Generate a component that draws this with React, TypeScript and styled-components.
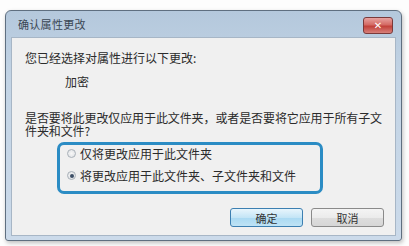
import styled, { createGlobalStyle } from "styled-components";

const Global = createGlobalStyle`
  html, body {
    margin: 0;
    padding: 0;
    background: #fdfdfd;
  }
  body {
    font-family: "Noto Sans CJK SC", "Noto Sans", sans-serif;
    font-size: 12px;
    color: #2b2b2b;
  }
`;

const Page = styled.div`
  width: 409px;
  height: 246px;
  padding: 10px 0 0 5px;
  box-sizing: border-box;
`;

const Window = styled.div`
  width: 397px;
  height: 231px;
  box-sizing: border-box;
  border: 1px solid #5f6f80;
  border-radius: 6px 6px 3px 3px;
  background: linear-gradient(180deg, #b4c8dc 0%, #c3d4e5 30%, #cbdaea 100%);
  box-shadow: 1px 2px 4px rgba(0, 0, 0, 0.25);
  display: flex;
  flex-direction: column;
  padding: 0 5px 4px 5px;
`;

const TitleBar = styled.div`
  height: 26px;
  display: flex;
  align-items: center;
  justify-content: space-between;
  padding: 0 3px 0 7px;
`;

const Title = styled.span`
  font-size: 11px;
  color: #3a4654;
  letter-spacing: 0.3px;
`;

const CloseButton = styled.div`
  width: 28px;
  height: 15px;
  margin-top: 2px;
  border: 1px solid #7a3a3a;
  border-radius: 3px;
  background: linear-gradient(180deg, #e8a3a0 0%, #d46a64 45%, #c2413a 55%, #d7807a 100%);
  display: flex;
  align-items: center;
  justify-content: center;
  color: #fff;
  font-family: "DejaVu Sans", sans-serif;
  font-size: 10px;
  font-weight: bold;
`;

const Panel = styled.div`
  flex: 1;
  background: #f0f0f0;
  border: 1px solid #a7b6c6;
  display: flex;
  flex-direction: column;
  padding: 13px 11px 8px 13px;
`;

const Line = styled.div<{ indent?: number; gap?: number }>`
  line-height: 14px;
  margin-left: ${(p) => p.indent ?? 0}px;
  margin-top: ${(p) => p.gap ?? 0}px;
`;

const Question = styled.div`
  margin-top: 22px;
  line-height: 13px;
  letter-spacing: -0.1px;
`;

const GroupBox = styled.div`
  margin: 5px 0 0 32px;
  width: 266px;
  height: 52px;
  box-sizing: border-box;
  border: 3px solid #2b8cc4;
  border-radius: 7px;
  display: flex;
  flex-direction: column;
  gap: 7px;
  padding: 1px 0 0 7px;
`;

const Option = styled.label`
  display: flex;
  align-items: center;
  gap: 4px;
  line-height: 15px;
`;

const Radio = styled.span<{ checked?: boolean }>`
  width: 9px;
  height: 9px;
  border-radius: 50%;
  box-sizing: border-box;
  border: 1px solid #a9b1b9;
  background: radial-gradient(circle, #f7f7f7 0%, #dcdfe3 100%);
  display: flex;
  align-items: center;
  justify-content: center;
  &::after {
    content: "";
    width: 4px;
    height: 4px;
    border-radius: 50%;
    background: ${(p) => (p.checked ? "#3d4f66" : "transparent")};
  }
`;

const Buttons = styled.div`
  margin-top: auto;
  display: flex;
  justify-content: flex-end;
  gap: 8px;
`;

const Button = styled.div<{ primary?: boolean }>`
  width: 73px;
  height: 19px;
  box-sizing: border-box;
  border: 1px solid ${(p) => (p.primary ? "#3c7fb1" : "#8a8a8a")};
  border-radius: 3px;
  background: ${(p) =>
    p.primary
      ? "linear-gradient(180deg, #e8f5fc 0%, #c4e5f6 50%, #a9d9f2 51%, #bfe3f5 100%)"
      : "linear-gradient(180deg, #f4f4f4 0%, #ebebeb 50%, #dddddd 51%, #d6d6d6 100%)"};
  display: flex;
  align-items: center;
  justify-content: center;
  font-size: 11px;
  color: #333;
`;

export default function App() {
  return (
    <Page>
      <Global />
      <Window>
        <TitleBar>
          <Title>确认属性更改</Title>
          <CloseButton>✕</CloseButton>
        </TitleBar>
        <Panel>
          <Line>您已经选择对属性进行以下更改:</Line>
          <Line indent={40} gap={10}>加密</Line>
          <Question>
            是否要将此更改仅应用于此文件夹，或者是否要将它应用于所有子文
            <br />
            件夹和文件?
          </Question>
          <GroupBox>
            <Option>
              <Radio />
              仅将更改应用于此文件夹
            </Option>
            <Option>
              <Radio checked />
              将更改应用于此文件夹、子文件夹和文件
            </Option>
          </GroupBox>
          <Buttons>
            <Button primary>确定</Button>
            <Button>取消</Button>
          </Buttons>
        </Panel>
      </Window>
    </Page>
  );
}
